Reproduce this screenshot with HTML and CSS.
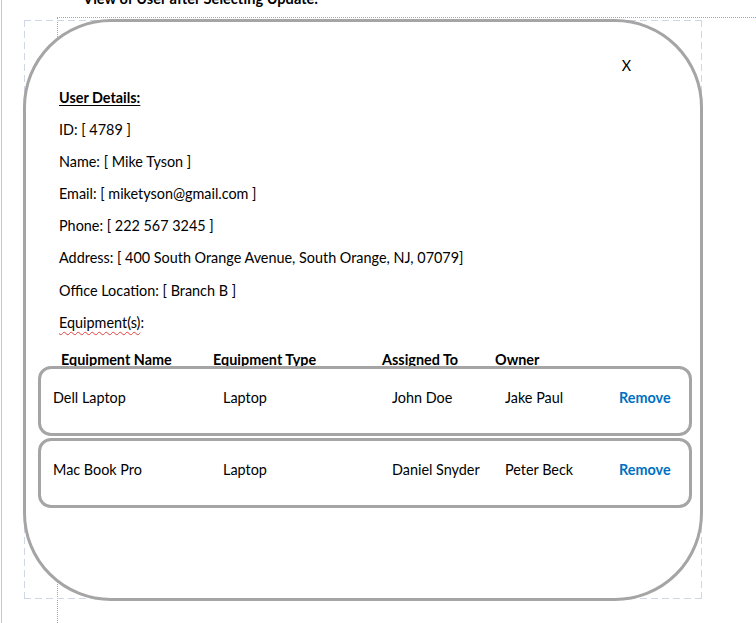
FILE: index.html
```html
<!DOCTYPE html>
<html lang="en">
<head>
<meta charset="utf-8">
<title>View of User after Selecting Update</title>
<link rel="stylesheet" href="styles.css">
</head>
<body>
<div class="page">
  <h1 class="doc-title">View of User after Selecting Update:</h1>
  <div class="text-boundary"></div>
  <div class="shape-frame"></div>
  <section class="modal">
    <div class="close-row"><span class="close">X</span></div>
    <div class="details">
      <p class="line heading">User Details:</p>
      <p class="line">ID: [ 4789 ]</p>
      <p class="line">Name: [ Mike Tyson ]</p>
      <p class="line">Email: [ miketyson@gmail.com ]</p>
      <p class="line">Phone: [ 222 567 3245 ]</p>
      <p class="line">Address: [ 400 South Orange Avenue, South Orange, NJ, 07079]</p>
      <p class="line">Office Location: [ Branch B ]</p>
      <p class="line"><span class="spell">Equipment(s)</span>:</p>
    </div>
    <div class="equip-head">
      <span>Equipment Name</span>
      <span>Equipment Type</span>
      <span>Assigned To</span>
      <span>Owner</span>
    </div>
    <div class="equip-list">
      <div class="equip-row">
        <span>Dell Laptop</span>
        <span>Laptop</span>
        <span>John Doe</span>
        <span>Jake Paul</span>
        <span class="remove">Remove</span>
      </div>
      <div class="equip-row">
        <span>Mac Book Pro</span>
        <span>Laptop</span>
        <span>Daniel Snyder</span>
        <span>Peter Beck</span>
        <span class="remove">Remove</span>
      </div>
    </div>
  </section>
</div>
</body>
</html>
```

FILE: styles.css
```css
html, body {
  margin: 0;
  padding: 0;
  background: #ffffff;
}

body {
  font-family: "Lato", "Open Sans", sans-serif;
  font-size: 14.4px;
  color: #000000;
}

.page {
  position: relative;
  height: 623px;
  overflow: hidden;
  display: flex;
  flex-direction: column;
  align-items: flex-start;
}

.page::before {
  content: "";
  position: absolute;
  left: 1px;
  top: 0;
  bottom: 0;
  width: 1px;
  background: #c8c8c8;
}

.doc-title {
  margin: -10px 0 0 83px;
  font-size: 14.6px;
  line-height: 18px;
  font-weight: 700;
}

.text-boundary {
  position: absolute;
  left: 57px;
  top: 17px;
  right: -20px;
  bottom: -20px;
  border: 1px dotted #8ea6f2;
}

.shape-frame {
  position: absolute;
  left: 24px;
  top: 20px;
  width: 678px;
  height: 579px;
  background:
    repeating-linear-gradient(to right, #cfd7e6 0 7px, transparent 7px 11px) left top / 100% 1px no-repeat,
    repeating-linear-gradient(to right, #cfd7e6 0 7px, transparent 7px 11px) left bottom / 100% 1px no-repeat,
    repeating-linear-gradient(to bottom, #cfd7e6 0 7px, transparent 7px 11px) left top / 1px 100% no-repeat,
    repeating-linear-gradient(to bottom, #cfd7e6 0 7px, transparent 7px 11px) right top / 1px 100% no-repeat;
}

.modal {
  position: relative;
  box-sizing: border-box;
  width: 680px;
  height: 582px;
  margin: 11px 0 0 23px;
  padding-top: 28px;
  border: 3px solid #a5a5a5;
  border-radius: 88px;
  background: #ffffff;
}

.close-row {
  display: flex;
  justify-content: flex-end;
  padding-right: 69px;
  height: 32px;
  line-height: 31px;
}

.details {
  padding-left: 33px;
}

.line {
  margin: 0;
  height: 32.1px;
  line-height: 31px;
  white-space: nowrap;
}

.heading {
  font-weight: 700;
  text-decoration: underline;
  text-underline-offset: 2px;
}

.spell {
  text-decoration: underline wavy #e0403c;
  text-decoration-thickness: 1px;
  text-underline-offset: 3px;
}

.equip-head {
  display: grid;
  grid-template-columns: 152px 169px 113px auto;
  margin-top: 13px;
  padding-left: 35px;
  height: 16px;
  line-height: 15px;
  font-weight: 700;
  white-space: nowrap;
}

.equip-list {
  display: flex;
  flex-direction: column;
  gap: 2px;
  margin: -2px 0 0 12px;
  width: 654px;
}

.equip-row {
  position: relative;
  box-sizing: border-box;
  height: 70px;
  display: grid;
  grid-template-columns: 170px 169px 113px 114px auto;
  align-items: center;
  padding: 0 0 7px 12px;
  border: 3px solid #a5a5a5;
  border-radius: 13px;
  background: #ffffff;
  white-space: nowrap;
}

.remove {
  color: #0070c0;
  font-weight: 700;
}
```
